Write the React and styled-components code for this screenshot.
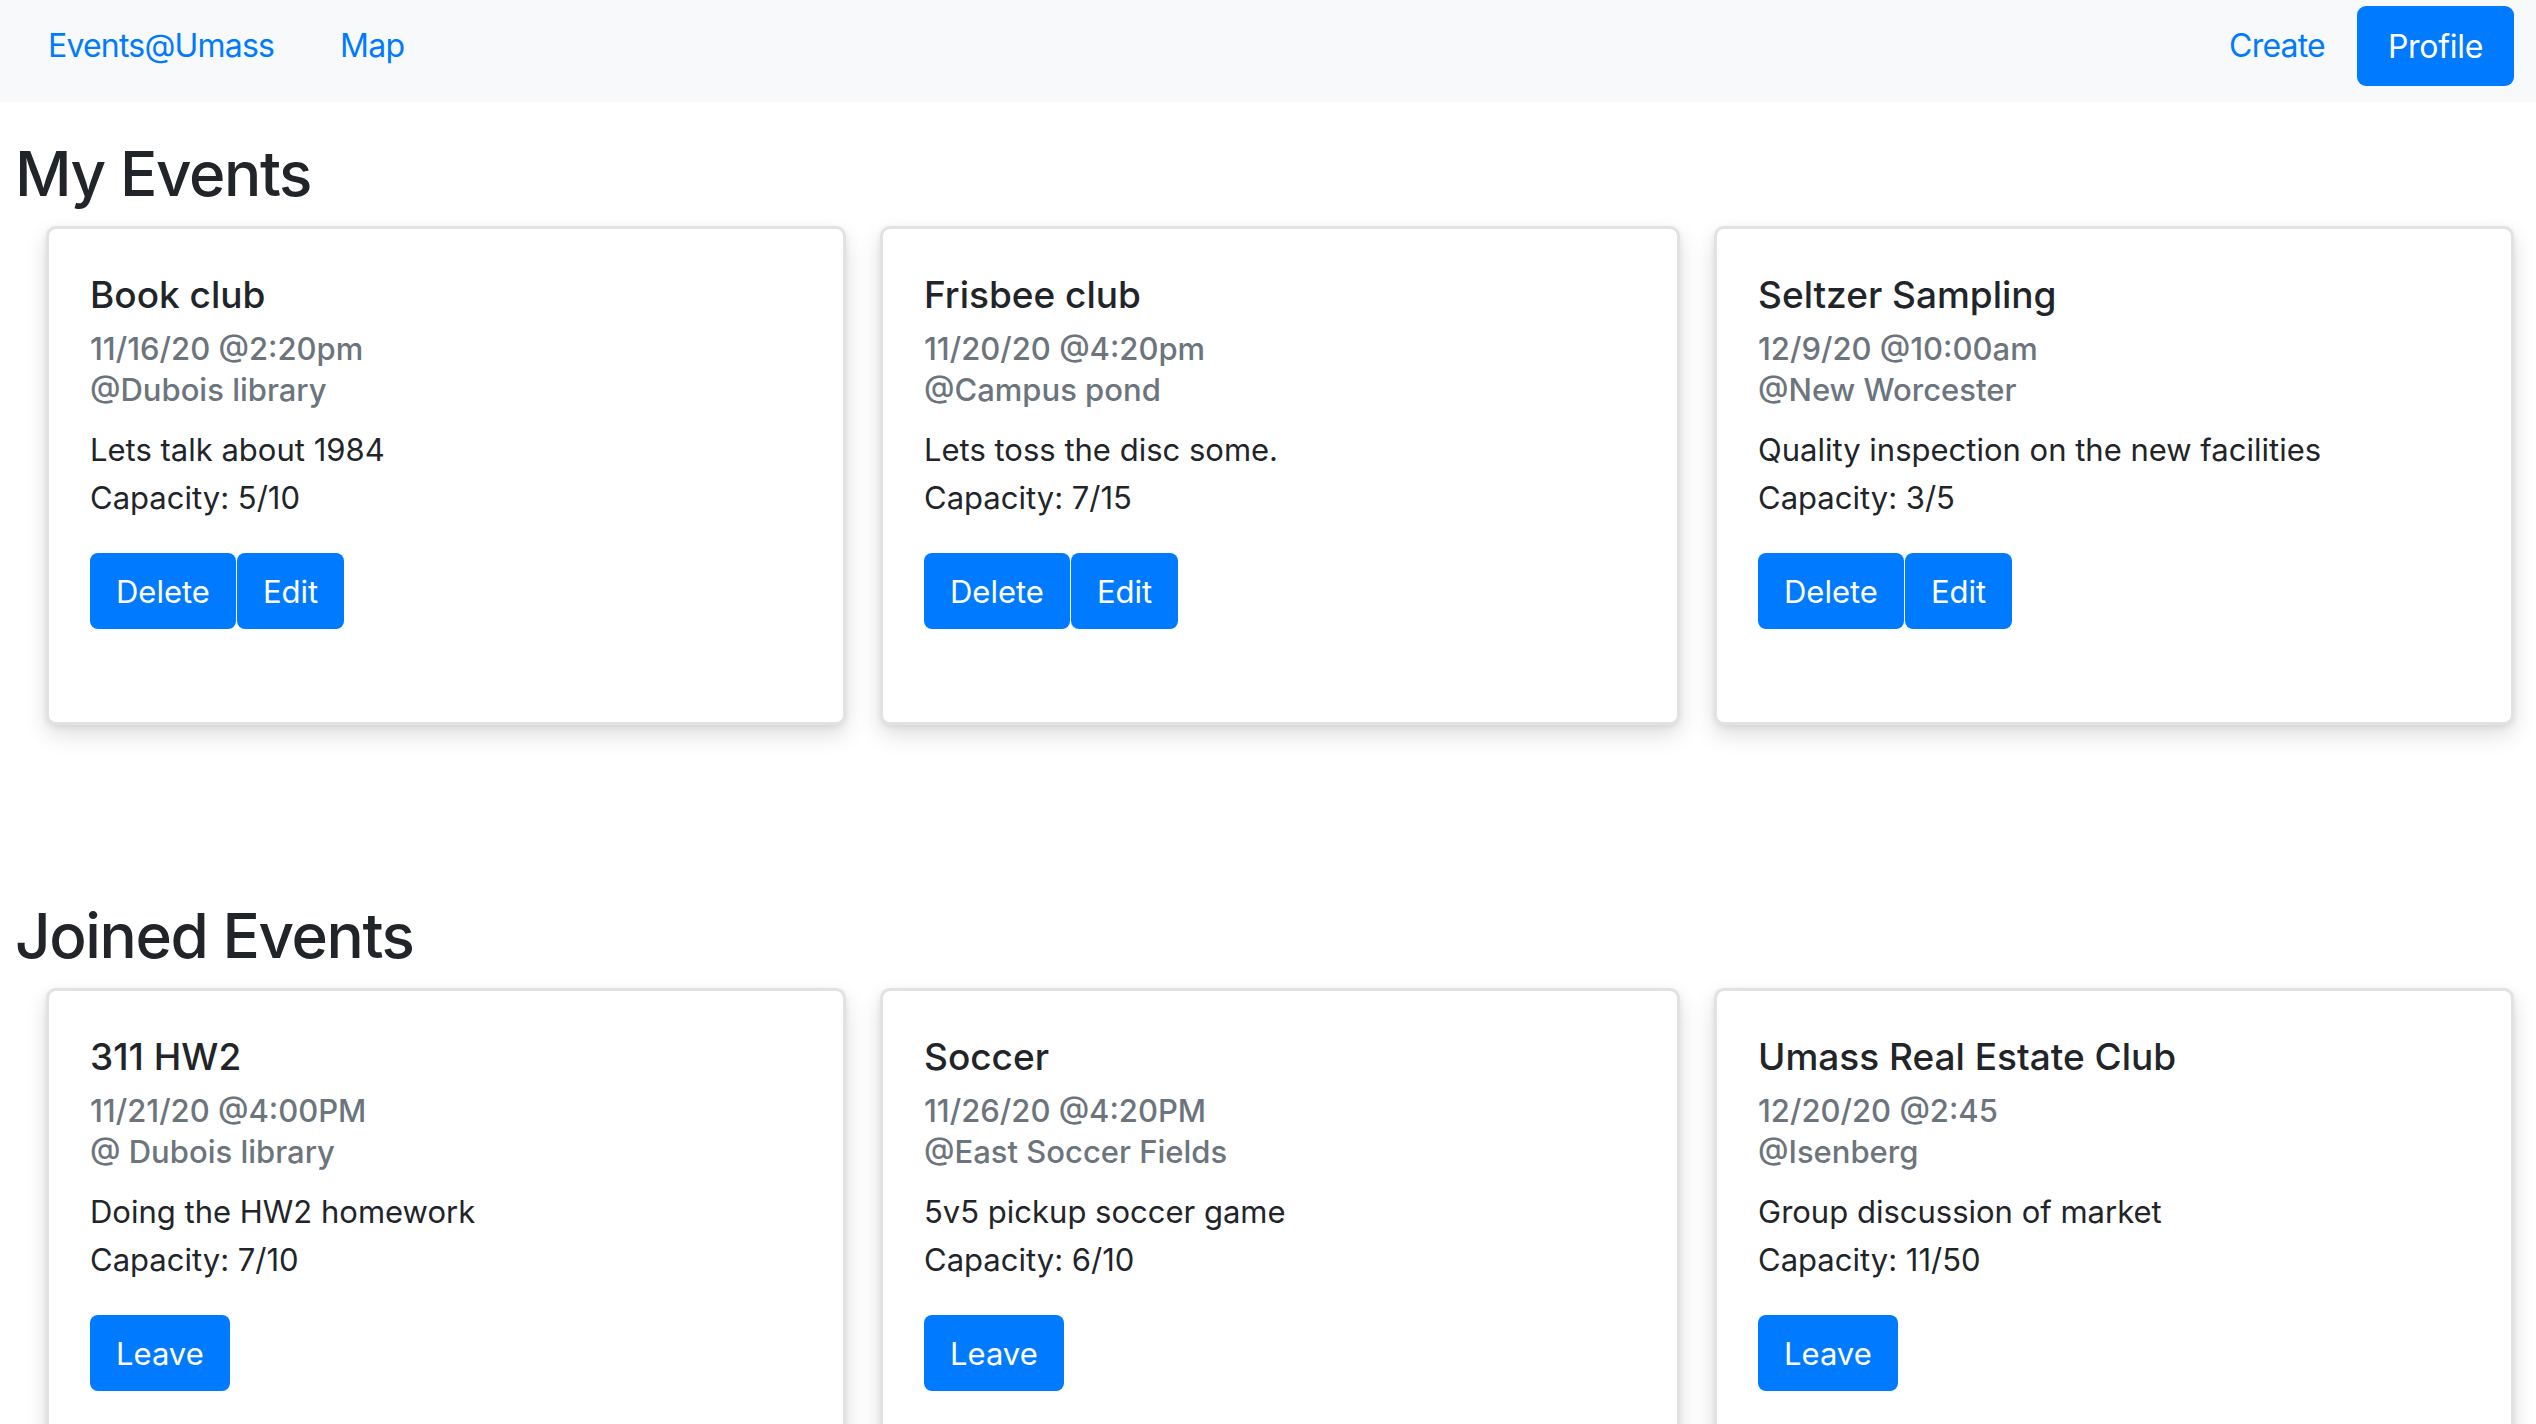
import React from 'react'
import styled, { createGlobalStyle } from 'styled-components'

const GlobalStyle = createGlobalStyle`
    *{
        box-sizing:border-box;
    }
    html,body{
        margin:0;
        padding:0;
        background:#fff;
        font-family:Inter, "Noto Sans", sans-serif;
        color:#212529;
    }
`

const myEvents = [
    { title: 'Book club', date: '11/16/20 @2:20pm', place: '@Dubois library', text: 'Lets talk about 1984', capacity: '5/10' },
    { title: 'Frisbee club', date: '11/20/20 @4:20pm', place: '@Campus pond', text: 'Lets toss the disc some.', capacity: '7/15' },
    { title: 'Seltzer Sampling', date: '12/9/20 @10:00am', place: '@New Worcester', text: 'Quality inspection on the new facilities', capacity: '3/5' },
]

const joinedEvents = [
    { title: '311 HW2', date: '11/21/20 @4:00PM', place: '@ Dubois library', text: 'Doing the HW2 homework', capacity: '7/10' },
    { title: 'Soccer', date: '11/26/20 @4:20PM', place: '@East Soccer Fields', text: '5v5 pickup soccer game', capacity: '6/10' },
    { title: 'Umass Real Estate Club', date: '12/20/20 @2:45', place: '@Isenberg', text: 'Group discussion of market', capacity: '11/50' },
]

function EventCard({ event, owner }) {
    return (
        <Card>
            <CardTitle>{event.title}</CardTitle>
            <SubTitle>{event.date}</SubTitle>
            <SubTitle>{event.place}</SubTitle>
            <CardText>
                <Line>{event.text}</Line>
                <Line>Capacity: {event.capacity}</Line>
            </CardText>
            <Buttons>
                {owner ? (
                    <>
                        <Button>Delete</Button>
                        <Button>Edit</Button>
                    </>
                ) : (
                    <Button>Leave</Button>
                )}
            </Buttons>
        </Card>
    )
}

function App() {
    return (
        <Page>
            <GlobalStyle />
            <NavBar>
                <NavGroup>
                    <NavLink href='#'>Events@Umass</NavLink>
                    <NavLink href='#'>Map</NavLink>
                </NavGroup>
                <NavGroup right>
                    <NavLink href='#'>Create</NavLink>
                    <ProfileButton>Profile</ProfileButton>
                </NavGroup>
            </NavBar>

            <Heading>My Events</Heading>
            <CardRow>
                {myEvents.map((e) => <EventCard key={e.title} event={e} owner />)}
            </CardRow>

            <Heading second>Joined Events</Heading>
            <CardRow>
                {joinedEvents.map((e) => <EventCard key={e.title} event={e} />)}
            </CardRow>
        </Page>
    )
}

export default App

const Page = styled.div`
    height:100vh;
    overflow:hidden;
`

const NavBar = styled.nav`
    height:102px;
    background-color:#f8f9fa;
    display:flex;
    align-items:flex-start;
    justify-content:space-between;
    padding:6px 22px 0 48px;
`

const NavGroup = styled.div`
    height:80px;
    display:flex;
    align-items:center;
    gap:${(p) => (p.right ? '32px' : '66px')};
`

const NavLink = styled.a`
    color:#007bff;
    text-decoration:none;
    font-size:32px;
    letter-spacing:-0.8px;
    line-height:48px;
`

const ProfileButton = styled.button`
    height:80px;
    padding:0 31px;
    border:none;
    border-radius:9px;
    background-color:#007bff;
    color:#fff;
    font-family:inherit;
    font-size:32px;
    letter-spacing:-0.3px;
    cursor:pointer;
`

const Heading = styled.h2`
    margin:${(p) => (p.second ? '172px' : '33px')} 0 14px;
    padding-left:15px;
    font-size:62px;
    font-weight:500;
    letter-spacing:-1.4px;
    line-height:77px;
`

const CardRow = styled.div`
    display:grid;
    grid-template-columns:repeat(3, 800px);
    gap:34px;
    padding-left:46px;
`

const Card = styled.div`
    height:499px;
    background:#fff;
    border:3px solid #e2e2e2;
    border-radius:10px;
    padding:44px 39px 43px 41px;
    box-shadow:0 10px 22px rgba(0,0,0,0.13), 0 2px 6px rgba(0,0,0,0.08);
`

const CardTitle = styled.h5`
    margin:0 0 11px;
    font-size:37px;
    font-weight:500;
    line-height:44px;
`

const SubTitle = styled.h6`
    margin:0;
    color:#6c757d;
    font-size:31px;
    font-weight:500;
    line-height:41px;
`

const CardText = styled.div`
    margin-top:16px;
    font-size:31px;
    line-height:47.5px;
`

const Line = styled.div``

const Buttons = styled.div`
    display:flex;
    gap:1px;
    margin-top:32px;
`

const Button = styled.button`
    height:76px;
    padding:0 26px;
    border:none;
    border-radius:8px;
    background-color:#007bff;
    color:#fff;
    font-family:inherit;
    font-size:31px;
    cursor:pointer;
`
